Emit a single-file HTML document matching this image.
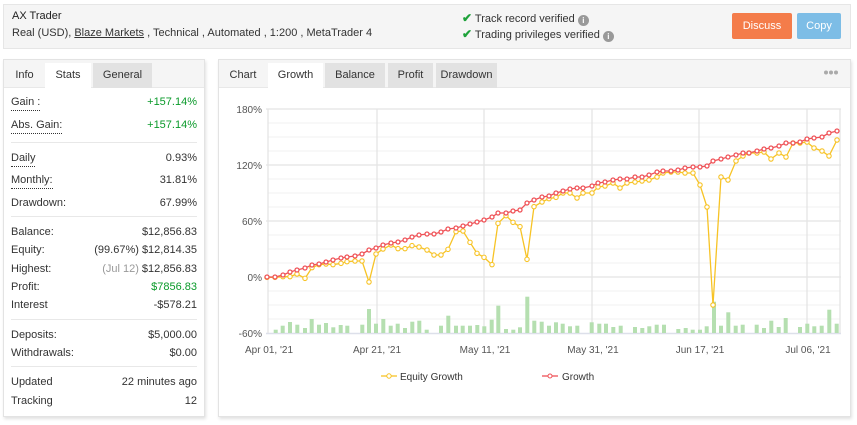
<!DOCTYPE html>
<html><head><meta charset="utf-8">
<style>
*{box-sizing:border-box;margin:0;padding:0}
body{width:857px;height:425px;background:#fff;font-family:"Liberation Sans",Arial,sans-serif;font-size:11px;color:#333;position:relative;overflow:hidden}
.abs{position:absolute}
.hdr{left:3px;top:4px;width:848px;height:45px;background:#f5f5f5;border:1px solid #e6e6e6}
.btn{position:absolute;height:26px;color:#fff;font-size:11px;text-align:center;line-height:26px;border-radius:2px}
.panel{background:#fff;border:1px solid #e3e3e3;box-shadow:1px 2px 3px rgba(0,0,0,.12)}
.tabs{position:absolute;left:0;top:0;right:0;height:28px;background:#f5f5f5;border-bottom:1px solid #e8e8e8}
.tab{position:absolute;top:3px;height:25px;line-height:25px;text-align:center;font-size:11px;color:#333}
.row{position:absolute;left:7px;right:7px;height:16px;line-height:16px}
.row .l{position:absolute;left:0}
.row .r{position:absolute;right:0}
.dot{border-bottom:1px dotted #333}
.sep{position:absolute;left:7px;right:7px;height:1px;background:#e8e8e8}
.g{color:#0a9a2a}
.gr{color:#999}
.chk{color:#1ea23a;font-weight:bold;font-size:12px}
.info{display:inline-block;width:11px;height:11px;border-radius:50%;background:#999;color:#fff;font-size:8px;line-height:11px;text-align:center;font-weight:bold;vertical-align:-1px}
</style></head><body>
<div class="abs hdr">
  <div class="abs" style="left:8px;top:5px;font-size:11px;color:#222">AX Trader</div>
  <div class="abs" style="left:8px;top:22px;font-size:11px;color:#333;white-space:nowrap">Real (USD), <span style="text-decoration:underline">Blaze Markets</span> , Technical , Automated , 1:200 , MetaTrader 4</div>
  <div class="abs" style="left:458px;top:6px;white-space:nowrap"><span class="chk">✔</span> Track record verified <span class="info">i</span></div>
  <div class="abs" style="left:458px;top:22px;white-space:nowrap"><span class="chk">✔</span> Trading privileges verified <span class="info">i</span></div>
  <div class="btn" style="left:728px;top:8px;width:60px;background:#f47c4a">Discuss</div>
  <div class="btn" style="left:793px;top:8px;width:44px;background:#7dbde6">Copy</div>
</div>

<div class="abs panel" style="left:3px;top:59px;width:202px;height:358px">
  <div class="tabs">
    <div class="tab" style="left:0;width:41px">Info</div>
    <div class="tab" style="left:41px;width:46px;background:#fff">Stats</div>
    <div class="tab" style="left:89px;width:59px;background:#e2e2e2">General</div>
  </div>
  <div class="row" style="top:34px"><span class="l dot">Gain :</span><span class="r g">+157.14%</span></div>
  <div class="row" style="top:57px"><span class="l dot">Abs. Gain:</span><span class="r g">+157.14%</span></div>
  <div class="sep" style="top:82px"></div>
  <div class="row" style="top:90px"><span class="l dot">Daily</span><span class="r">0.93%</span></div>
  <div class="row" style="top:112px"><span class="l dot">Monthly:</span><span class="r">31.81%</span></div>
  <div class="row" style="top:135px"><span class="l">Drawdown:</span><span class="r">67.99%</span></div>
  <div class="sep" style="top:156px"></div>
  <div class="row" style="top:164px"><span class="l">Balance:</span><span class="r">$12,856.83</span></div>
  <div class="row" style="top:182px"><span class="l">Equity:</span><span class="r">(99.67%) $12,814.35</span></div>
  <div class="row" style="top:201px"><span class="l">Highest:</span><span class="r"><span class="gr">(Jul 12)</span> $12,856.83</span></div>
  <div class="row" style="top:219px"><span class="l">Profit:</span><span class="r g">$7856.83</span></div>
  <div class="row" style="top:237px"><span class="l">Interest</span><span class="r">-$578.21</span></div>
  <div class="sep" style="top:259px"></div>
  <div class="row" style="top:267px"><span class="l">Deposits:</span><span class="r">$5,000.00</span></div>
  <div class="row" style="top:285px"><span class="l">Withdrawals:</span><span class="r">$0.00</span></div>
  <div class="sep" style="top:306px"></div>
  <div class="row" style="top:314px"><span class="l">Updated</span><span class="r">22 minutes ago</span></div>
  <div class="row" style="top:333px"><span class="l">Tracking</span><span class="r">12</span></div>
</div>

<div class="abs panel" style="left:218px;top:59px;width:633px;height:358px">
  <div class="tabs">
    <div class="tab" style="left:3px;width:42px">Chart</div>
    <div class="tab" style="left:49px;width:55px;background:#fff">Growth</div>
    <div class="tab" style="left:106px;width:60px;background:#e2e2e2">Balance</div>
    <div class="tab" style="left:169px;width:45px;background:#e2e2e2">Profit</div>
    <div class="tab" style="left:217px;width:61px;background:#e2e2e2">Drawdown</div>
    <svg class="abs" style="right:12px;top:10px" width="14" height="5"><circle cx="2" cy="2.5" r="2" fill="#aaa"/><circle cx="7" cy="2.5" r="2" fill="#aaa"/><circle cx="12" cy="2.5" r="2" fill="#aaa"/></svg>
  </div>
</div>

<svg id="ch" class="abs" style="left:0;top:0" width="857" height="425" xmlns="http://www.w3.org/2000/svg" font-family="Liberation Sans, Arial, sans-serif" font-size="10" fill="#555">
  <g stroke="#f0f0f0" stroke-width="1">
    <line x1="268" y1="123" x2="840" y2="123"/><line x1="268" y1="137" x2="840" y2="137"/><line x1="268" y1="151" x2="840" y2="151"/>
    <line x1="268" y1="179" x2="840" y2="179"/><line x1="268" y1="193" x2="840" y2="193"/><line x1="268" y1="207" x2="840" y2="207"/>
    <line x1="268" y1="235" x2="840" y2="235"/><line x1="268" y1="249" x2="840" y2="249"/><line x1="268" y1="263" x2="840" y2="263"/>
    <line x1="268" y1="291" x2="840" y2="291"/><line x1="268" y1="305" x2="840" y2="305"/><line x1="268" y1="319" x2="840" y2="319"/>
  </g>
  <g stroke="#e4e4e4" stroke-width="1.3">
    <line x1="266" y1="109" x2="841" y2="109"/><line x1="266" y1="165" x2="841" y2="165"/><line x1="266" y1="221" x2="841" y2="221"/><line x1="266" y1="277" x2="841" y2="277"/>
    <line x1="268" y1="109" x2="268" y2="333"/><line x1="377" y1="109" x2="377" y2="333"/><line x1="484" y1="109" x2="484" y2="333"/><line x1="592" y1="109" x2="592" y2="333"/><line x1="699" y1="109" x2="699" y2="333"/><line x1="807" y1="109" x2="807" y2="333"/><line x1="840" y1="109" x2="840" y2="333"/>
  </g>
  <line x1="266" y1="333.5" x2="841" y2="333.5" stroke="#dde0ea" stroke-width="1.5"/>
  <g text-anchor="end">
    <text x="262" y="113">180%</text><text x="262" y="169">120%</text><text x="262" y="225">60%</text><text x="262" y="281">0%</text><text x="262" y="337">-60%</text>
  </g>
  <g text-anchor="middle">
    <text x="269" y="353">Apr 01, '21</text><text x="377" y="353">Apr 21, '21</text><text x="485" y="353">May 11, '21</text><text x="593" y="353">May 31, '21</text><text x="700" y="353">Jun 17, '21</text><text x="808" y="353">Jul 06, '21</text>
  </g>
  <g id="bars" fill="#b5dfb0"></g>
  <polyline id="ye" fill="none" stroke="#f7c325" stroke-width="1.3"/>
  <polyline id="re" fill="none" stroke="#ef5257" stroke-width="1.3"/>
  <g id="ym" fill="#fff" stroke="#f7c325" stroke-width="1.1"></g>
  <g id="rm" fill="#fff" stroke="#ef5257" stroke-width="1.3"></g>
  <line x1="381" y1="376" x2="397" y2="376" stroke="#f7c325" stroke-width="1.3"/><circle cx="389" cy="376" r="2.2" fill="#fff" stroke="#f7c325"/>
  <text x="400" y="380" fill="#333">Equity Growth</text>
  <line x1="542" y1="376" x2="558" y2="376" stroke="#ef5257" stroke-width="1.3"/><circle cx="550" cy="376" r="2" fill="#fff" stroke="#ef5257"/>
  <text x="562" y="380" fill="#333">Growth</text>
</svg>
<script>
var xs=[267,275,283,290,297,305,312,319,326,333,341,347,355,362,369,376,383,391,398,405,412,419,427,434,441,448,456,463,470,477,484,492,498,506,513,520,527,534,542,549,556,563,570,577,583,592,598,605,613,620,627,635,642,649,657,663,671,678,685,693,700,707,713,721,728,736,743,749,757,764,771,779,786,793,800,807,814,822,829,837];
var ry=[277,277,275,272,270,268,265,264,262,260,258,257,256,254,250,248,245,243,242,240,237,235,234,234,232,229,228,226,224,222,220,217,213,213,211,210,203,200,197,196,193,191,189,188,188,186,183,182,180,179,179,177,177,175,172,171,171,170,168,167,167,166,161,159,157,155,153,153,151,149,148,146,143,143,142,139,138,137,133,131];
var yz=[532,532,530,530,522,535,503,494,492,494,490,485,483,483,546,462,447,435,446,446,437,441,450,465,465,448,395,393,427,460,472,494,370,347,367,380,478,320,306,296,292];
var yy=yz.map(function(v){return v/3+100});
yy=yy.concat([193,193,198,193,193,187,186,183,188,183,182,181,180,177,173,172,172,173,173,185,207,305,177,180,161,156,153,153,152,159,153,157,143,143,142,148,151,156,140,132]);
var ns="http://www.w3.org/2000/svg";
function pts(a){return xs.map(function(x,i){return x+","+a[i]}).join(" ")}
document.getElementById("re").setAttribute("points",pts(ry));
document.getElementById("ye").setAttribute("points",pts(yy));
function mk(id,a,r){var g=document.getElementById(id);xs.forEach(function(x,i){var c=document.createElementNS(ns,"circle");c.setAttribute("cx",x);c.setAttribute("cy",a[i]);c.setAttribute("r",r);g.appendChild(c)})}
mk("ym",yy,2.2);mk("rm",ry,2);
var b=[[275.7,3.3],[282.7,7.3],[290,11],[297.3,8.3],[305,5],[311.7,14],[319,8.3],[326,10],[333.3,5.7],[340.7,8],[347.3,7.3],[362.3,8.3],[369,24],[376,9.3],[383.3,14],[390.7,7.3],[397.7,9.3],[405,5],[412.3,11.3],[419.3,12.3],[426.7,3.3],[441,7.3],[448.3,17.3],[456,7.3],[462.7,7.3],[470,7.3],[477.3,8],[484.3,6.7],[491.7,13.3],[498.3,27.3],[506,4],[513.3,3.3],[520,5.7],[527.3,36.3],[534.3,12.3],[541.7,11.3],[549,7.3],[556,10.7],[562.7,9.3],[570,6.7],[577.3,7.3],[591.7,10.7],[599.3,9.3],[606,9.3],[613.3,6],[620.7,7.3],[635,6],[642.3,5],[649.3,6.7],[656.7,8.3],[664,8.3],[678.3,4],[685.7,5],[692.7,3.3],[700,3.3],[706.7,6.7],[714,31.3],[721,7.3],[728.3,20.7],[735.7,7.3],[742.7,8.3],[756.7,8.3],[764,5],[771.3,12.3],[778.7,6],[785.7,15],[800,6],[807.3,9.3],[814.3,6.7],[821.7,7.3],[829.3,23.3],[836.7,9.3]];
var bg=document.getElementById("bars");
b.forEach(function(p){var r=document.createElementNS(ns,"rect");r.setAttribute("x",p[0]-2);r.setAttribute("y",333-p[1]);r.setAttribute("width",4);r.setAttribute("height",p[1]);bg.appendChild(r)});
</script>
</body></html>
